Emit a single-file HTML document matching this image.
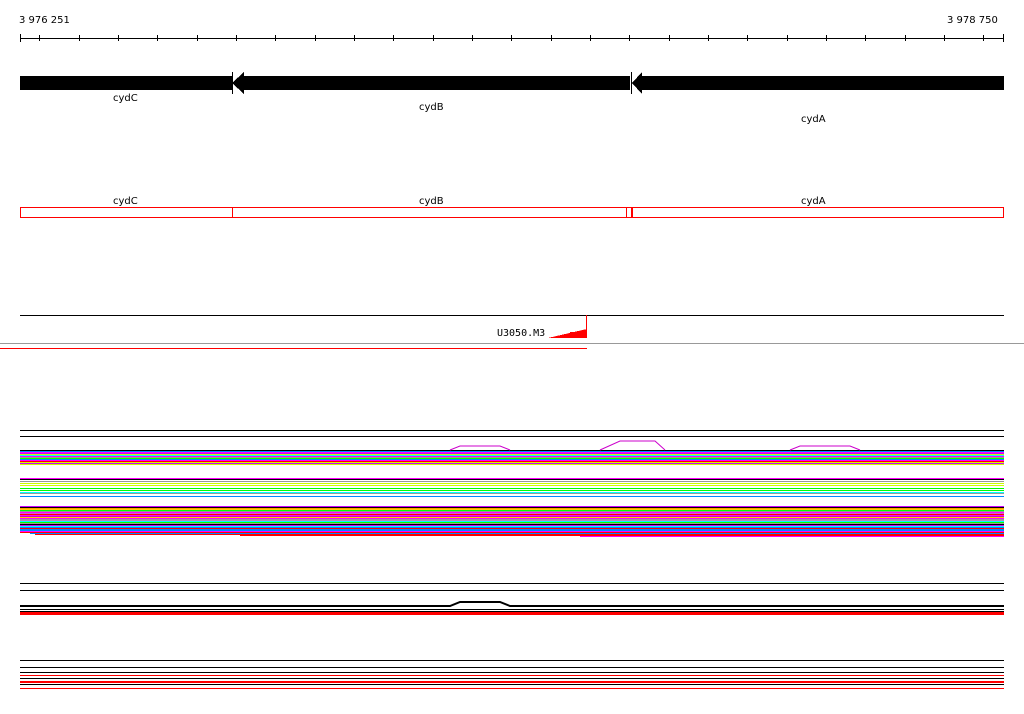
<!DOCTYPE html>
<html><head><style>
body{margin:0;background:#fff;width:1024px;height:714px;overflow:hidden}
svg{display:block}
text{font-family:"DejaVu Sans","Liberation Sans",sans-serif;font-size:10px;fill:#000}
</style></head><body>
<svg width="1024" height="714" xmlns="http://www.w3.org/2000/svg" shape-rendering="crispEdges">
<text x="19" y="23">3 976 251</text>
<text x="947" y="23">3 978 750</text>
<rect x="20" y="38" width="984" height="1" fill="#000"/>
<g stroke="#000">
<path d="M20.5 34v8M39.5 35v6M79.5 35v6M118.5 35v6M157.5 35v6M197.5 35v6M236.5 35v6M275.5 35v6M315.5 35v6M354.5 35v6M393.5 35v6M433.5 35v6M472.5 35v6M511.5 35v6M551.5 35v6M590.5 35v6M629.5 35v6M669.5 35v6M708.5 35v6M747.5 35v6M787.5 35v6M826.5 35v6M865.5 35v6M905.5 35v6M944.5 35v6M983.5 35v6M1003.5 34v8"/>
</g>
<rect x="20" y="76" width="212" height="14" fill="#000"/>
<polygon points="232,83 244,72 244,76 630,76 630,90 244,90 244,94" fill="#000"/>
<polygon points="632,83 642,72 642,76 1004,76 1004,90 642,90 642,94" fill="#000"/>
<rect x="232" y="72" width="1" height="22" fill="#000"/>
<rect x="631" y="72" width="1" height="22" fill="#000"/>
<text x="113" y="101">cydC</text>
<text x="419" y="110">cydB</text>
<text x="801" y="122">cydA</text>
<text x="113" y="204">cydC</text>
<text x="419" y="204">cydB</text>
<text x="801" y="204">cydA</text>
<g fill="#f00">
<rect x="20" y="207" width="984" height="1"/>
<rect x="20" y="217" width="984" height="1"/>
<rect x="20" y="207" width="1" height="11"/>
<rect x="232" y="207" width="1" height="11"/>
<rect x="626" y="207" width="1" height="11"/>
<rect x="631" y="207" width="2" height="11"/>
<rect x="1003" y="207" width="1" height="11"/>
</g>
<rect x="20" y="315" width="984" height="1" fill="#000"/>
<text x="497" y="336" style="font-family:'DejaVu Sans Mono',monospace">U3050.M3</text>
<polygon points="548,338 587,329 587,338" fill="#f00"/>
<rect x="570" y="332" width="17" height="6" fill="#f00"/>
<rect x="586" y="315" width="1" height="23" fill="#f00"/>
<rect x="0" y="343" width="1024" height="1" fill="#999"/>
<rect x="0" y="348" width="587" height="1" fill="#f00"/>
<rect x="20" y="430" width="984" height="1" fill="#000"/>
<rect x="20" y="436" width="984" height="1" fill="#000"/>
<g>
<rect x="20" y="450" width="984" height="1" fill="#000"/>
<rect x="20" y="451" width="984" height="1" fill="#08f"/>
<rect x="20" y="452" width="984" height="1" fill="#f0f"/>
<rect x="20" y="453" width="984" height="1" fill="#c0f"/>
<rect x="20" y="454" width="984" height="1" fill="#cf0"/>
<rect x="20" y="455" width="984" height="1" fill="#0ff"/>
<rect x="20" y="456" width="984" height="1" fill="#f0f"/>
<rect x="20" y="457" width="984" height="1" fill="#999"/>
<rect x="20" y="458" width="984" height="1" fill="#0f0"/>
<rect x="20" y="459" width="984" height="1" fill="#08f"/>
<rect x="20" y="460" width="984" height="1" fill="#f0f"/>
<rect x="20" y="461" width="984" height="1" fill="#f00"/>
<rect x="20" y="462" width="984" height="1" fill="#cf0"/>
<rect x="20" y="463" width="984" height="1" fill="#c0f"/>
<rect x="20" y="464" width="984" height="1" fill="#cf0"/>
</g>
<path d="M450 450 L460 446 L500 446 L510 450 M600 450 L620 441 L655 441 L665 450 M790 450 L800 446 L850 446 L860 450" fill="none" stroke="#c0c" shape-rendering="auto"/>
<g>
<rect x="20" y="478" width="984" height="1" fill="#f0f"/>
<rect x="20" y="479" width="984" height="1" fill="#000"/>
<rect x="20" y="481" width="984" height="1" fill="#999"/>
<rect x="20" y="483" width="984" height="1" fill="#cf0"/>
<rect x="20" y="485" width="984" height="1" fill="#cf0"/>
<rect x="20" y="488" width="984" height="1" fill="#0f0"/>
<rect x="20" y="490" width="984" height="1" fill="#0f0"/>
<rect x="20" y="492" width="984" height="1" fill="#0ff"/>
<rect x="20" y="493" width="984" height="1" fill="#999"/>
<rect x="20" y="496" width="984" height="1" fill="#08f"/>
</g>
<g>
<rect x="20" y="506" width="984" height="1" fill="#c0f"/>
<rect x="20" y="507" width="984" height="1" fill="#000"/>
<rect x="20" y="508" width="984" height="1" fill="#f90"/>
<rect x="20" y="509" width="984" height="1" fill="#fc0"/>
<rect x="20" y="510" width="984" height="1" fill="#0f0"/>
<rect x="20" y="511" width="984" height="1" fill="#999"/>
<rect x="20" y="512" width="984" height="1" fill="#f0f"/>
<rect x="20" y="513" width="984" height="1" fill="#c6c"/>
<rect x="20" y="514" width="984" height="1" fill="#f00"/>
<rect x="20" y="515" width="984" height="1" fill="#f0f"/>
<rect x="20" y="516" width="984" height="1" fill="#c0c"/>
<rect x="20" y="517" width="984" height="1" fill="#fc0"/>
<rect x="20" y="518" width="984" height="1" fill="#f0f"/>
<rect x="20" y="519" width="984" height="1" fill="#999"/>
<rect x="20" y="520" width="984" height="1" fill="#b8b"/>
<rect x="20" y="521" width="984" height="1" fill="#0ff"/>
<rect x="20" y="522" width="984" height="1" fill="#0f0"/>
<rect x="20" y="523" width="984" height="1" fill="#999"/>
<rect x="20" y="524" width="984" height="1" fill="#000"/>
<rect x="20" y="525" width="984" height="1" fill="#c0f"/>
<rect x="20" y="526" width="984" height="1" fill="#0ff"/>
<rect x="20" y="527" width="984" height="1" fill="#08f"/>
<rect x="20" y="528" width="984" height="1" fill="#f00"/>
<rect x="20" y="529" width="984" height="1" fill="#08f"/>
<rect x="20" y="530" width="984" height="1" fill="#08f"/>
<rect x="20" y="531" width="984" height="1" fill="#f0f"/>
<rect x="20" y="532" width="984" height="1" fill="#f00"/>
<rect x="30" y="533" width="974" height="1" fill="#08f"/>
<rect x="35" y="534" width="969" height="1" fill="#f00"/>
<rect x="240" y="535" width="764" height="1" fill="#f00"/>
<rect x="580" y="536" width="424" height="1" fill="#f0f"/>
</g>
<rect x="20" y="583" width="984" height="1" fill="#000"/>
<rect x="20" y="590" width="984" height="1" fill="#000"/>
<path d="M20 606 L450 606 L460 602 L500 602 L510 606 L1004 606" fill="none" stroke="#000" stroke-width="2" shape-rendering="auto"/>
<rect x="20" y="609" width="984" height="1" fill="#000"/>
<rect x="20" y="611" width="984" height="1" fill="#000"/>
<rect x="20" y="612" width="984" height="3" fill="#f00"/>
<rect x="20" y="660" width="984" height="1" fill="#000"/>
<rect x="20" y="667" width="984" height="1" fill="#000"/>
<rect x="20" y="672" width="984" height="1" fill="#000"/>
<rect x="20" y="675" width="984" height="1" fill="#f00"/>
<rect x="20" y="678" width="984" height="1" fill="#000"/>
<rect x="20" y="681" width="984" height="2" fill="#f00"/>
<rect x="20" y="684" width="984" height="1" fill="#000"/>
<rect x="20" y="688" width="984" height="1" fill="#f00"/>
</svg>
</body></html>
